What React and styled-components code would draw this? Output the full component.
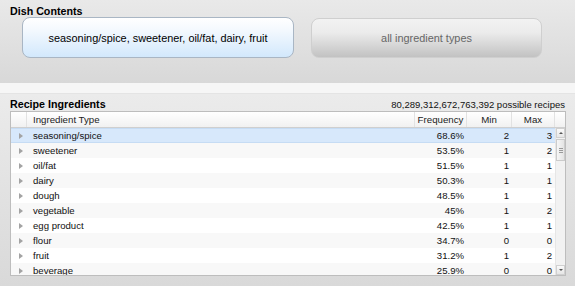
import React from "react";
import styled, { createGlobalStyle, css } from "styled-components";

const Global = createGlobalStyle`
  html, body { margin: 0; padding: 0; background: #dcdcdc; }
  body { font-family: "Liberation Sans", Arial, sans-serif; }
  #root { width: 575px; height: 286px; overflow: hidden; }
`;

const Page = styled.div`
  width: 575px;
  height: 286px;
  display: flex;
  flex-direction: column;
`;

const TopPanel = styled.section`
  height: 83px;
  box-sizing: border-box;
  padding: 5px 10px 0;
  background: linear-gradient(#e9e9e9, #d8d8d8);
`;

const Band = styled.div`
  height: 10px;
  background: #f6f6f6;
  border-bottom: 1px solid #e4e4e4;
`;

const PanelTitle = styled.h2`
  margin: 0;
  font-size: 10.7px;
  line-height: ${(p) => p.$lh || "12px"};
  font-weight: bold;
  color: #000;
`;

const ButtonRow = styled.div`
  display: flex;
  gap: 17px;
  padding-left: 12px;
  align-items: flex-start;
`;

const ChoiceButton = styled.button`
  box-sizing: border-box;
  height: 41px;
  border-radius: 8px;
  font-family: inherit;
  font-size: 10.9px;
  padding: 0;
  ${(p) =>
    p.$active
      ? css`
          width: 272px;
          border: 1px solid #a9b6c4;
          background: linear-gradient(#ffffff 0%, #f4f9fe 30%, #d2e8fc 100%);
          color: #000;
        `
      : css`
          width: 231px;
          margin-top: 1px;
          height: 40px;
          border: 1px solid #cfcfcf;
          background: linear-gradient(#f2f2f2 0%, #ececec 35%, #c2c2c2 100%);
          color: #666;
        `}
`;

const BottomPanel = styled.section`
  flex: 1;
  padding: 4px 9px 0 10px;
  background: linear-gradient(#ebebeb, #d9d9d9);
`;

const TitleRow = styled.div`
  display: flex;
  justify-content: space-between;
  align-items: baseline;
  padding-right: 1px;
`;

const Count = styled.span`
  font-size: 9.5px;
  color: #111;
`;

const Table = styled.div`
  width: 556px;
  box-sizing: border-box;
  border: 1px solid #bdbdbd;
  background: #fff;
  font-size: 9.7px;
`;

const cols = "16px 388px 52px 45px 43px 10px";

const HeaderRow = styled.div`
  display: grid;
  grid-template-columns: ${cols};
  height: 15px;
  background: linear-gradient(#ffffff, #f1f1f1);
  border-bottom: 1px solid #cfcfcf;
  color: #222;
`;

const HeaderCell = styled.div`
  line-height: 15px;
  border-right: 1px solid #e2e2e2;
  padding: ${(p) => (p.$first ? "0 0 0 6px" : "0")};
  text-align: ${(p) => p.$align || "left"};
  white-space: nowrap;
  overflow: hidden;
  &:last-child { border-right: none; }
`;

const BodyWrap = styled.div`
  display: flex;
  height: 147px;
  overflow: hidden;
`;

const Rows = styled.div`
  width: 544px;
  font-size: 9.6px;
`;

const Row = styled.div`
  display: grid;
  grid-template-columns: 16px 388px 52px 45px 43px;
  height: 15px;
  box-sizing: border-box;
  color: #111;
  background: ${(p) => (p.$selected ? "#d7e8fb" : p.$odd ? "#f8f8f8" : "#ffffff")};
  ${(p) =>
    p.$selected &&
    css`
      border-top: 1px solid #c6dcf4;
      border-bottom: 1px solid #c6dcf4;
    `}
`;

const Cell = styled.div`
  line-height: ${(p) => (p.$selected ? "13px" : "15px")};
  padding: 0 3px 0 ${(p) => (p.$first ? "6px" : "3px")};
  text-align: ${(p) => p.$align || "left"};
  white-space: nowrap;
  overflow: hidden;
`;

const Expander = styled.div`
  display: flex;
  align-items: center;
  justify-content: flex-end;
  padding-right: 4px;
`;

const Triangle = styled.span`
  width: 0;
  height: 0;
  border-top: 3.5px solid transparent;
  border-bottom: 3.5px solid transparent;
  border-left: 4px solid #a3a3a3;
`;

const Scrollbar = styled.div`
  width: 10px;
  display: flex;
  flex-direction: column;
  background: #f2f2f2;
  border-left: 1px solid #e6e6e6;
  box-sizing: border-box;
`;

const ScrollArrow = styled.div`
  height: 10px;
  display: flex;
  align-items: center;
  justify-content: center;
  background: linear-gradient(#fafafa, #e6e6e6);
  border: 1px solid #d0d0d0;
  box-sizing: border-box;
  ${(p) => (p.$down ? "margin-top: auto;" : "")}
`;

const ArrowGlyph = styled.span`
  width: 0;
  height: 0;
  border-left: 2px solid transparent;
  border-right: 2px solid transparent;
  ${(p) => (p.$down ? "border-top: 2px solid #555;" : "border-bottom: 2px solid #555;")}
`;

const Thumb = styled.div`
  height: 22px;
  margin-top: 1px;
  box-sizing: border-box;
  border: 1px solid #cbcbcb;
  background: linear-gradient(90deg, #f6f6f6, #e4e4e4);
  display: flex;
  flex-direction: column;
  align-items: center;
  justify-content: center;
  gap: 1px;
`;

const Grip = styled.span`
  width: 4px;
  height: 1px;
  background: #999;
`;

const data = [
  ["seasoning/spice", "68.6%", 2, 3],
  ["sweetener", "53.5%", 1, 2],
  ["oil/fat", "51.5%", 1, 1],
  ["dairy", "50.3%", 1, 1],
  ["dough", "48.5%", 1, 1],
  ["vegetable", "45%", 1, 2],
  ["egg product", "42.5%", 1, 1],
  ["flour", "34.7%", 0, 0],
  ["fruit", "31.2%", 1, 2],
  ["beverage", "25.9%", 0, 0],
];

export default function App() {
  return (
    <Page>
      <Global />
      <TopPanel>
        <PanelTitle>Dish Contents</PanelTitle>
        <ButtonRow>
          <ChoiceButton $active>seasoning/spice, sweetener, oil/fat, dairy, fruit</ChoiceButton>
          <ChoiceButton>all ingredient types</ChoiceButton>
        </ButtonRow>
      </TopPanel>
      <Band />
      <BottomPanel>
        <TitleRow>
          <PanelTitle $lh="13px">Recipe Ingredients</PanelTitle>
          <Count>80,289,312,672,763,392 possible recipes</Count>
        </TitleRow>
        <Table>
          <HeaderRow>
            <HeaderCell />
            <HeaderCell $first>Ingredient Type</HeaderCell>
            <HeaderCell $align="center">Frequency</HeaderCell>
            <HeaderCell $align="center">Min</HeaderCell>
            <HeaderCell $align="center">Max</HeaderCell>
            <HeaderCell />
          </HeaderRow>
          <BodyWrap>
            <Rows>
              {data.map(([name, freq, min, max], i) => (
                <Row key={name} $selected={i === 0} $odd={i % 2 === 1}>
                  <Expander>
                    <Triangle />
                  </Expander>
                  <Cell $first $selected={i === 0}>{name}</Cell>
                  <Cell $align="right" $selected={i === 0}>{freq}</Cell>
                  <Cell $align="right" $selected={i === 0}>{min}</Cell>
                  <Cell $align="right" $selected={i === 0}>{max}</Cell>
                </Row>
              ))}
            </Rows>
            <Scrollbar>
              <ScrollArrow>
                <ArrowGlyph />
              </ScrollArrow>
              <Thumb>
                <Grip />
                <Grip />
                <Grip />
              </Thumb>
              <ScrollArrow $down>
                <ArrowGlyph $down />
              </ScrollArrow>
            </Scrollbar>
          </BodyWrap>
        </Table>
      </BottomPanel>
    </Page>
  );
}
